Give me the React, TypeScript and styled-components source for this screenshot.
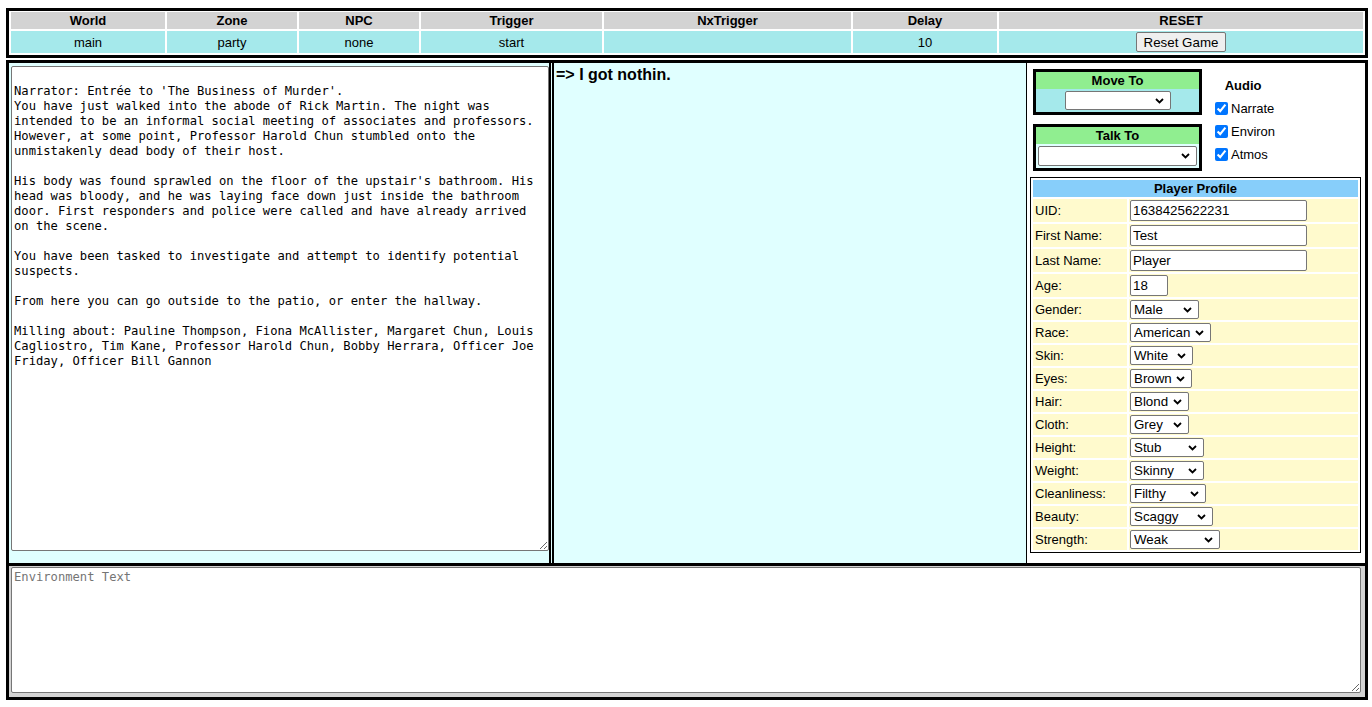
import React from 'react';
import styled, { createGlobalStyle } from 'styled-components';

const GlobalStyle = createGlobalStyle`
  body {
    margin: 8px 4px 0 6px;
    font-family: "Liberation Sans", Arial, sans-serif;
    font-size: 13px;
    color: #000;
    background: #fff;
  }
`;

const Page = styled.div`
  display: flex;
  flex-direction: column;
  gap: 2px;
`;

const StatusGrid = styled.div`
  display: grid;
  grid-template-columns: 154px 130px 120px 181px 247px 144px 1fr;
  gap: 2px;
  padding: 1px 2px 2px 2px;
  border: 3px solid #000;
`;

const StatusHead = styled.div`
  background: #d3d3d3;
  font-weight: bold;
  text-align: center;
  height: 17px;
  line-height: 17px;
`;

const StatusValue = styled.div`
  background: #a5e9eb;
  height: 22px;
  display: flex;
  align-items: center;
  justify-content: center;
`;

const ResetButton = styled.button`
  font: 13.33px "Liberation Sans", Arial, sans-serif;
  height: 20px;
  padding: 0 7px;
  border: 1px solid #767676;
  border-radius: 2px;
  background: #efefef;
  color: #000;
`;

const MainFrame = styled.div`
  border: 3px solid #000;
  display: flex;
  flex-direction: column;
`;

const Workspace = styled.div`
  display: flex;
  height: 500px;
  border-bottom: 3px solid #000;
`;

const NarrationCell = styled.div`
  flex: none;
  background: #e0ffff;
  padding: 3px 0 0 2px;
`;

const TextBox = styled.textarea<{ $w: number; $h: number }>`
  display: block;
  box-sizing: border-box;
  width: ${(p) => p.$w}px;
  height: ${(p) => p.$h}px;
  margin: 0;
  padding: 2px;
  border: 1px solid #767676;
  border-radius: 2px;
  background: #fff;
  color: #000;
  font-family: "DejaVu Sans Mono", monospace;
  font-size: 12.17px;
  line-height: 15px;
  &::placeholder {
    color: #757575;
  }
`;

const ResponseCell = styled.div`
  flex: 1;
  background: #e0ffff;
  border-left: 5px double #000;
  padding: 3px 2px;
  font-size: 16px;
  font-weight: bold;
  line-height: 18px;
`;

const ControlCell = styled.div`
  flex: none;
  width: 331px;
  border-left: 1px solid #000;
  background: #fff;
  padding: 6px 4px 0 3px;
  display: flex;
  flex-direction: column;
`;

const ControlRow = styled.div`
  display: flex;
  margin-left: 3px;
  gap: 9px;
`;

const PickColumn = styled.div`
  display: flex;
  flex-direction: column;
  gap: 9px;
`;

const PickBox = styled.div`
  width: 169px;
  box-sizing: border-box;
  border: 3px solid #000;
  display: flex;
  flex-direction: column;
`;

const PickHead = styled.div`
  background: #90ee90;
  font-weight: bold;
  text-align: center;
  height: 17px;
  line-height: 17px;
`;

const PickBody = styled.div<{ $bg: string }>`
  background: ${(p) => p.$bg};
  padding: 2px;
  display: flex;
  justify-content: center;
`;

const SelectWrap = styled.span`
  position: relative;
  display: inline-flex;
`;

const Select = styled.select<{ $w: number; $h?: number }>`
  appearance: none;
  -webkit-appearance: none;
  width: ${(p) => p.$w}px;
  height: ${(p) => p.$h ?? 19}px;
  box-sizing: border-box;
  margin: 0;
  padding: 0 18px 0 3px;
  border: 1px solid #767676;
  border-radius: 2px;
  font-family: "Liberation Sans", Arial, sans-serif;
  font-size: 13.33px;
  color: #000;
  background: #fff;
`;

const Chevron = styled.svg`
  position: absolute;
  right: 7px;
  top: 50%;
  width: 9px;
  height: 6px;
  margin-top: -3px;
  pointer-events: none;
`;

const AudioColumn = styled.div`
  align-self: center;
  display: flex;
  flex-direction: column;
`;

const AudioHead = styled.div`
  height: 23px;
  line-height: 23px;
  font-weight: bold;
  text-align: center;
`;

const CheckRow = styled.label`
  height: 23px;
  display: flex;
  align-items: center;
`;

const Check = styled.input`
  width: 13px;
  height: 13px;
  margin: 3px 3px 3px 4px;
`;

const Profile = styled.div`
  margin-top: 6px;
  border: 1px solid #000;
  display: grid;
  grid-template-columns: 94px 1fr;
  gap: 2px;
  padding: 2px;
`;

const ProfileTitle = styled.div`
  grid-column: 1 / -1;
  background: #87cefa;
  font-weight: bold;
  text-align: center;
  height: 17px;
  line-height: 17px;
`;

const FieldLabel = styled.div`
  background: #fffacd;
  padding: 0 2px;
  display: flex;
  align-items: center;
`;

const FieldValue = styled.div`
  background: #fffacd;
  padding: 1px;
  display: flex;
  align-items: center;
`;

const TextInput = styled.input<{ $w: number }>`
  width: ${(p) => p.$w}px;
  height: 21px;
  box-sizing: border-box;
  margin: 0;
  padding: 1px 2px;
  border: 1px solid #767676;
  border-radius: 2px;
  font-family: "Liberation Sans", Arial, sans-serif;
  font-size: 13.33px;
  color: #000;
`;

const EnvCell = styled.div`
  background: #d3d3d3;
  padding: 1px 2px 4px 2px;
`;

function Dropdown({ w, h, value }: { w: number; h?: number; value?: string }) {
  return (
    <SelectWrap>
      <Select $w={w} $h={h} defaultValue={value ?? ''}>
        <option>{value ?? ''}</option>
      </Select>
      <Chevron viewBox="0 0 9 6">
        <path d="M1 1 L4.5 4.5 L8 1" stroke="#000" strokeWidth="1.8" fill="none" />
      </Chevron>
    </SelectWrap>
  );
}

const status = [
  ['World', 'main'],
  ['Zone', 'party'],
  ['NPC', 'none'],
  ['Trigger', 'start'],
  ['NxTrigger', ''],
  ['Delay', '10'],
];

const narration = `
Narrator: Entrée to 'The Business of Murder'.
You have just walked into the abode of Rick Martin. The night was
intended to be an informal social meeting of associates and professors.
However, at some point, Professor Harold Chun stumbled onto the
unmistakenly dead body of their host.

His body was found sprawled on the floor of the upstair's bathroom. His
head was bloody, and he was laying face down just inside the bathroom
door. First responders and police were called and have already arrived
on the scene.

You have been tasked to investigate and attempt to identify potential
suspects.

From here you can go outside to the patio, or enter the hallway.

Milling about: Pauline Thompson, Fiona McAllister, Margaret Chun, Louis
Cagliostro, Tim Kane, Professor Harold Chun, Bobby Herrara, Officer Joe
Friday, Officer Bill Gannon`;

const textFields: [string, string, number][] = [
  ['UID:', '1638425622231', 177],
  ['First Name:', 'Test', 177],
  ['Last Name:', 'Player', 177],
  ['Age:', '18', 38],
];

const selectFields: [string, string, number][] = [
  ['Gender:', 'Male', 69],
  ['Race:', 'American', 81],
  ['Skin:', 'White', 63],
  ['Eyes:', 'Brown', 62],
  ['Hair:', 'Blond', 59],
  ['Cloth:', 'Grey', 59],
  ['Height:', 'Stub', 74],
  ['Weight:', 'Skinny', 74],
  ['Cleanliness:', 'Filthy', 76],
  ['Beauty:', 'Scaggy', 83],
  ['Strength:', 'Weak', 90],
];

export default function App() {
  return (
    <>
      <GlobalStyle />
      <Page>
        <StatusGrid>
          {status.map(([h]) => (
            <StatusHead key={h}>{h}</StatusHead>
          ))}
          <StatusHead>RESET</StatusHead>
          {status.map(([h, v]) => (
            <StatusValue key={h}>{v}</StatusValue>
          ))}
          <StatusValue>
            <ResetButton>Reset Game</ResetButton>
          </StatusValue>
        </StatusGrid>

        <MainFrame>
          <Workspace>
            <NarrationCell>
              <TextBox $w={538} $h={485} readOnly defaultValue={narration} />
            </NarrationCell>
            <ResponseCell>=&gt; I got nothin.</ResponseCell>
            <ControlCell>
              <ControlRow>
                <PickColumn>
                  <PickBox>
                    <PickHead>Move To</PickHead>
                    <PickBody $bg="#a5e9eb">
                      <Dropdown w={106} />
                    </PickBody>
                  </PickBox>
                  <PickBox>
                    <PickHead>Talk To</PickHead>
                    <PickBody $bg="#e0ffff">
                      <Dropdown w={159} h={20} />
                    </PickBody>
                  </PickBox>
                </PickColumn>
                <AudioColumn>
                  <AudioHead>Audio</AudioHead>
                  {['Narrate', 'Environ', 'Atmos'].map((n) => (
                    <CheckRow key={n}>
                      <Check type="checkbox" defaultChecked />
                      {n}
                    </CheckRow>
                  ))}
                </AudioColumn>
              </ControlRow>
              <Profile>
                <ProfileTitle>Player Profile</ProfileTitle>
                {textFields.map(([l, v, w]) => (
                  <React.Fragment key={l}>
                    <FieldLabel>{l}</FieldLabel>
                    <FieldValue>
                      <TextInput $w={w} defaultValue={v} />
                    </FieldValue>
                  </React.Fragment>
                ))}
                {selectFields.map(([l, v, w]) => (
                  <React.Fragment key={l}>
                    <FieldLabel>{l}</FieldLabel>
                    <FieldValue>
                      <Dropdown w={w} value={v} />
                    </FieldValue>
                  </React.Fragment>
                ))}
              </Profile>
            </ControlCell>
          </Workspace>
          <EnvCell>
            <TextBox $w={1350} $h={126} placeholder="Environment Text" />
          </EnvCell>
        </MainFrame>
      </Page>
    </>
  );
}
